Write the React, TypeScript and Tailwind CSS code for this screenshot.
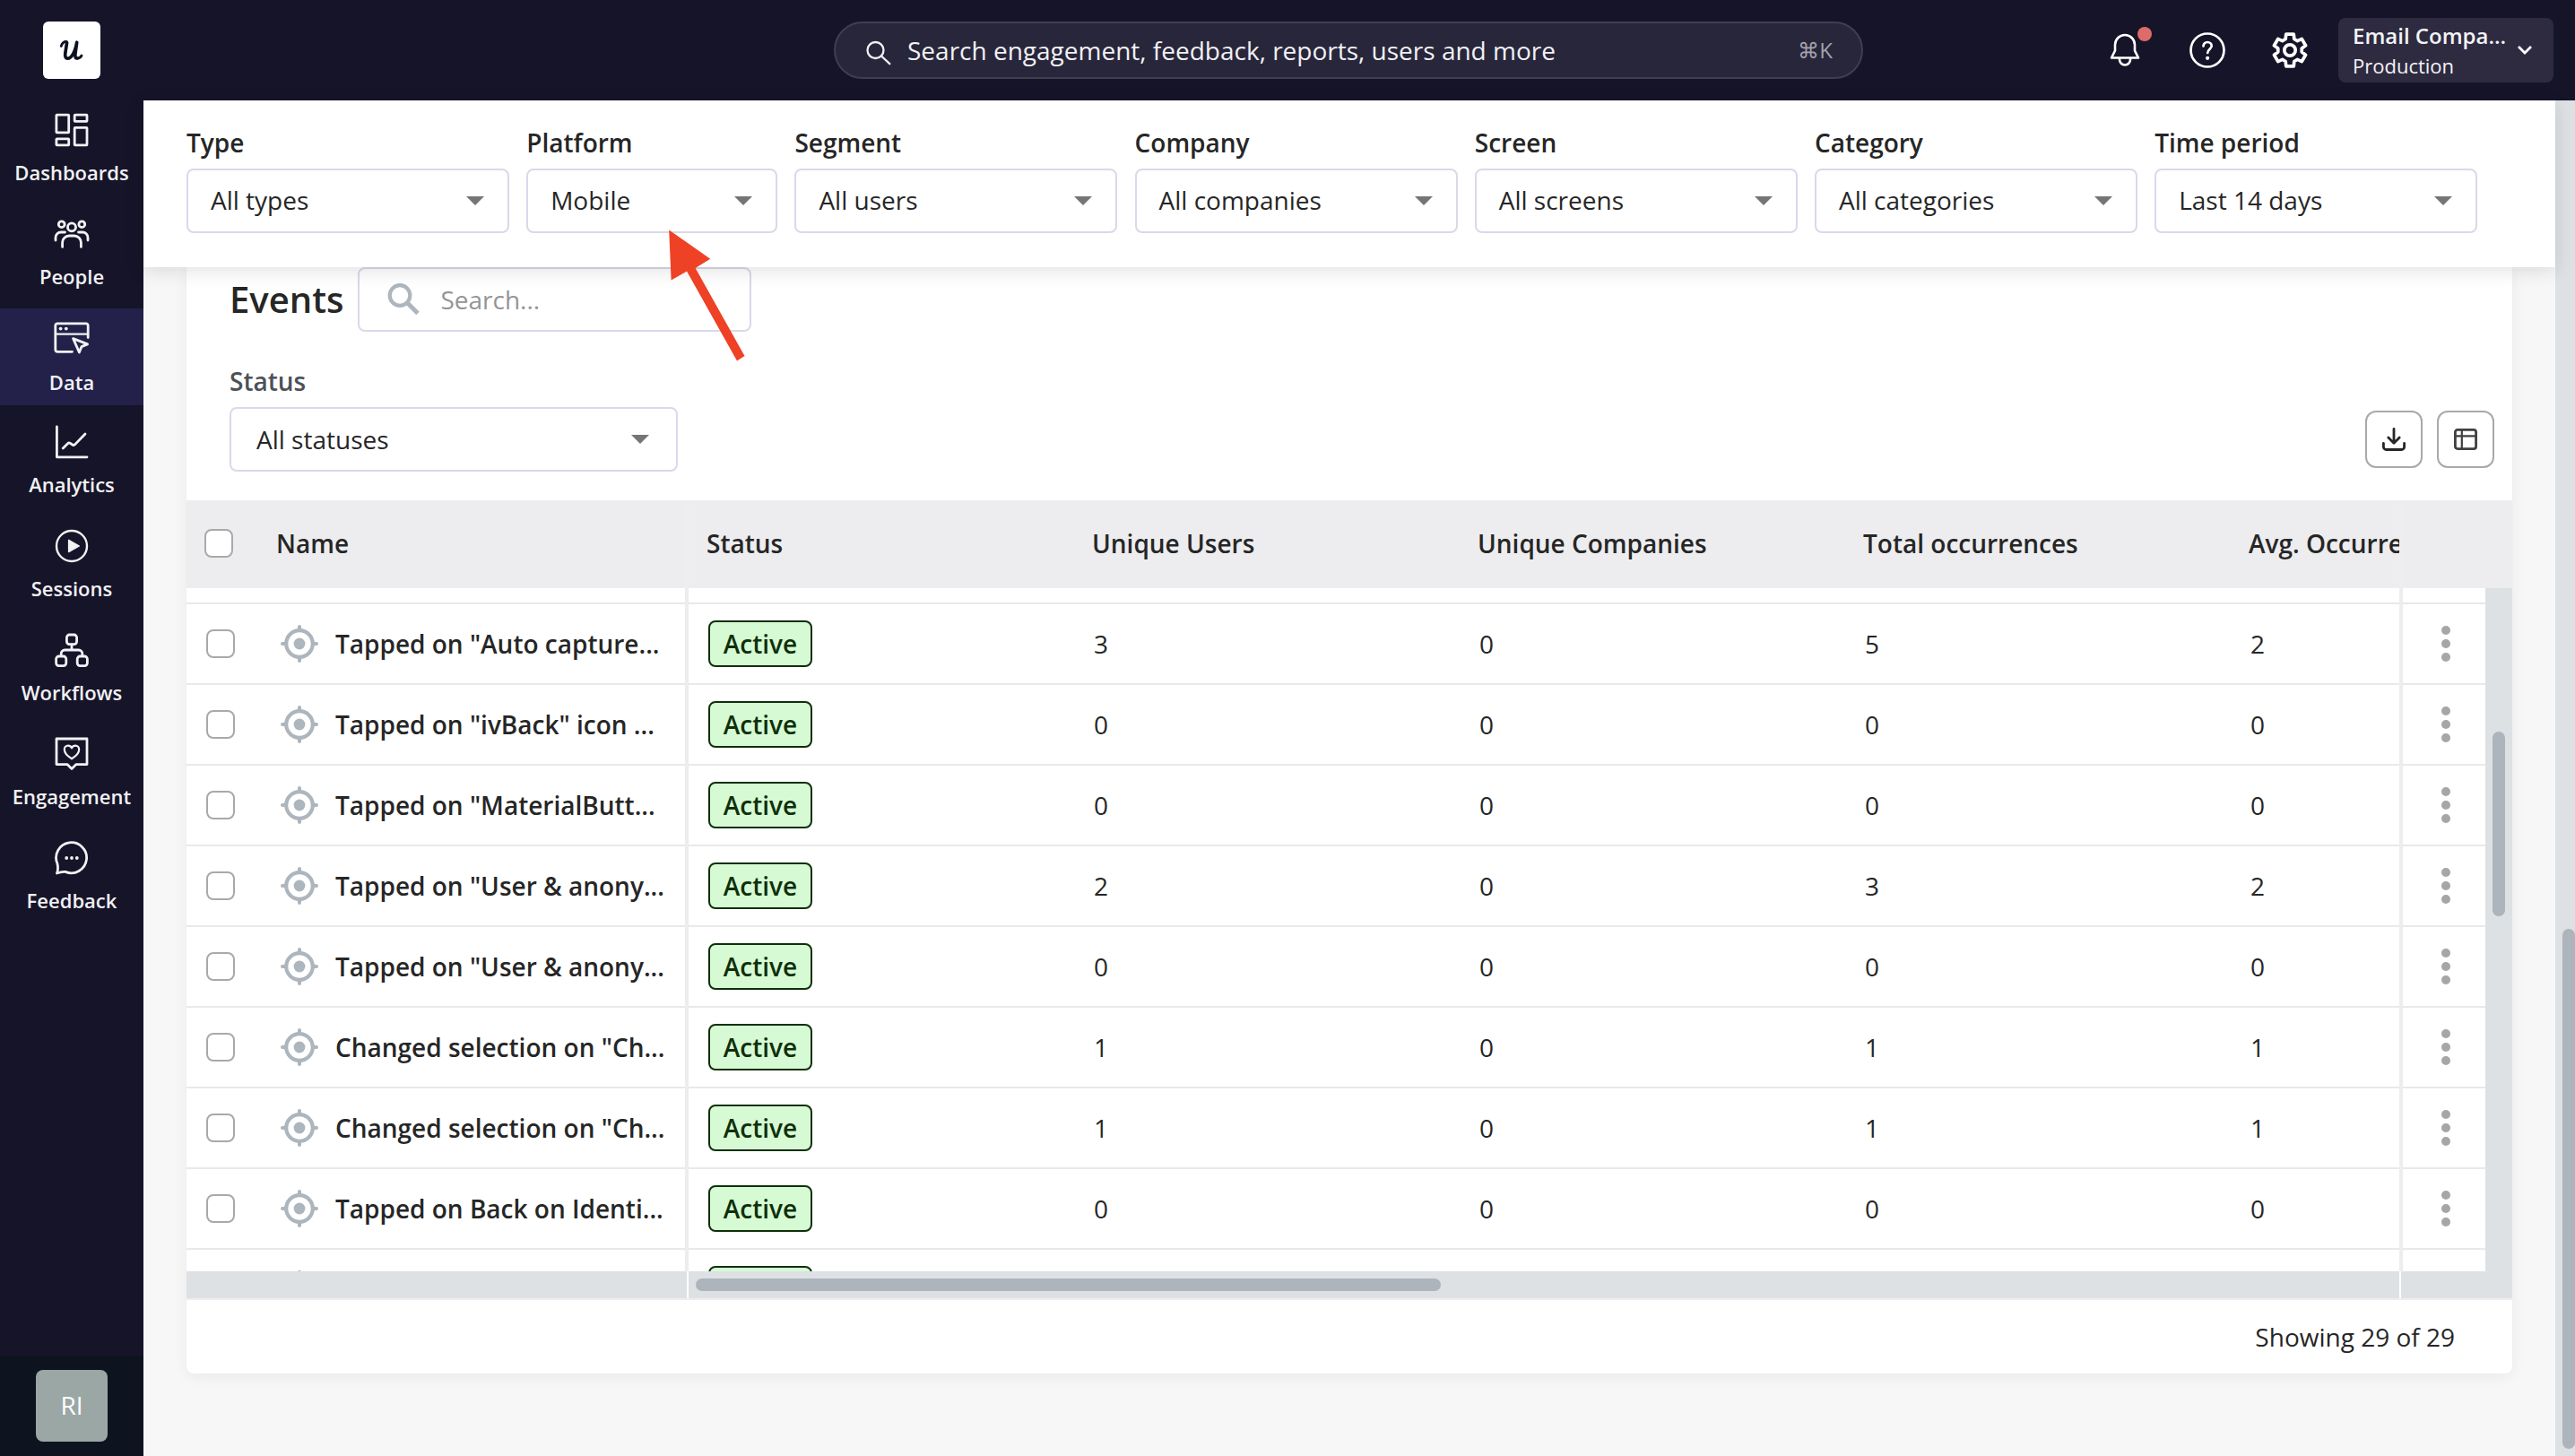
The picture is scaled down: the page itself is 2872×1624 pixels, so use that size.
import React from 'react';

interface NavItem {
  label: string;
  icon: React.ReactNode;
  active?: boolean;
}

interface EventRow {
  name: string;
  values: number[];
}

const navItems: NavItem[] = [
  {
    label: 'Dashboards',
    icon: (
      <>
        <rect x="2.9" y="3.1" width="13.8" height="19.8" rx="0.6" />
        <rect x="23.2" y="3.1" width="13.8" height="7.2" rx="0.6" />
        <rect x="23.2" y="17.4" width="13.8" height="19.5" rx="0.6" />
        <rect x="2.9" y="29.8" width="13.8" height="7.1" rx="0.6" />
      </>
    ),
  },
  {
    label: 'People',
    icon: (
      <>
        <circle cx="8.7" cy="9.2" r="3.4" />
        <circle cx="20" cy="12.4" r="4.5" />
        <circle cx="31.3" cy="9.2" r="3.4" />
        <path d="M9.6 34.4V29.5a7.5 7.5 0 0 1 7.5-7.5h5.8a7.5 7.5 0 0 1 7.5 7.5v4.9" />
        <path d="M2 27v-3a6 6 0 0 1 6-6h4.5M38 27v-3a6 6 0 0 0-6-6h-4.5" />
      </>
    ),
  },
  {
    label: 'Data',
    active: true,
    icon: (
      <>
        <path d="M20.5 35.3H4a2.2 2.2 0 0 1-2.2-2.2V6A2.2 2.2 0 0 1 4 3.8h32A2.2 2.2 0 0 1 38.2 6v13.5" />
        <path d="M2 15.6h36" strokeWidth="2.2" />
        <circle cx="7.6" cy="9.6" r="1.9" fill="currentColor" stroke="none" />
        <circle cx="13.8" cy="9.6" r="1.9" fill="currentColor" stroke="none" />
        <path d="M21.6 20.6 37.6 26.9 31 29.6 28.4 36z" />
      </>
    ),
  },
  {
    label: 'Analytics',
    icon: (
      <>
        <path d="M3.4 3v33.8H37" />
        <path d="M10.2 27l5.6-5.6a1.8 1.8 0 0 1 2.2-.2l3.2 2a1.8 1.8 0 0 0 2.3-.3L35 11" />
      </>
    ),
  },
  {
    label: 'Sessions',
    icon: (
      <>
        <circle cx="20" cy="20" r="17" strokeWidth="2.4" />
        <path d="M16.6 13.4v13.2L28.4 20z" fill="currentColor" strokeWidth="1.4" />
      </>
    ),
  },
  {
    label: 'Workflows',
    icon: (
      <>
        <rect x="14.4" y="3" width="11.2" height="10.6" rx="3" />
        <rect x="2.6" y="27" width="11.2" height="10.6" rx="3" />
        <rect x="26.2" y="27" width="11.2" height="10.6" rx="3" />
        <path d="M20 14v6M8.2 26.5V24a4 4 0 0 1 4-4h15.6a4 4 0 0 1 4 4v2.5" />
      </>
    ),
  },
  {
    label: 'Engagement',
    icon: (
      <>
        <path d="M3 3h34v28.6H25L20 36.4l-5-4.8H3z" />
        <path
          d="M20 25.3c-3-1.8-8.2-5.6-8.2-10.2 0-2.7 1.9-4.4 4.1-4.4 1.8 0 3.3 1 4.1 2.7.8-1.7 2.3-2.7 4.1-2.7 2.2 0 4.1 1.7 4.1 4.4 0 4.6-5.2 8.4-8.2 10.2z"
          strokeWidth="2.2"
        />
      </>
    ),
  },
  {
    label: 'Feedback',
    icon: (
      <>
        <path d="M3.5 37c1.2-3 1.5-5.800.5-10.500A17 17 0 1 1 13 35.400c-3-.6-6 .6-9.500 1.600z" />
        <circle cx="14.2" cy="20" r="1.9" fill="currentColor" stroke="none" />
        <circle cx="20" cy="20" r="1.9" fill="currentColor" stroke="none" />
        <circle cx="25.8" cy="20" r="1.9" fill="currentColor" stroke="none" />
      </>
    ),
  },
];

const filters = [
  { label: 'Type', value: 'All types', width: 'w-[360px]' },
  { label: 'Platform', value: 'Mobile', width: 'w-[280px]' },
  { label: 'Segment', value: 'All users', width: 'w-[360px]' },
  { label: 'Company', value: 'All companies', width: 'w-[360px]' },
  { label: 'Screen', value: 'All screens', width: 'w-[360px]' },
  { label: 'Category', value: 'All categories', width: 'w-[360px]' },
  { label: 'Time period', value: 'Last 14 days', width: 'w-[360px]' },
];

const columns = ['Status', 'Unique Users', 'Unique Companies', 'Total occurrences', 'Avg. Occurrences'];

const events: EventRow[] = [
  { name: 'Tapped on "Auto capture...', values: [3, 0, 5, 2] },
  { name: 'Tapped on "ivBack" icon ...', values: [0, 0, 0, 0] },
  { name: 'Tapped on "MaterialButt...', values: [0, 0, 0, 0] },
  { name: 'Tapped on "User & anony...', values: [2, 0, 3, 2] },
  { name: 'Tapped on "User & anony...', values: [0, 0, 0, 0] },
  { name: 'Changed selection on "Ch...', values: [1, 0, 1, 1] },
  { name: 'Changed selection on "Ch...', values: [1, 0, 1, 1] },
  { name: 'Tapped on Back on Identi...', values: [0, 0, 0, 0] },
];

// six flat teeth around the centre of a 40x40 box
const gearPath = (() => {
  const points: string[] = [];
  for (let i = 0; i < 6; i++) {
    const mid = -90 + i * 60;
    [[-21, 13.4], [-13.5, 18.3], [13.5, 18.3], [21, 13.4]].forEach(([offset, radius]) => {
      const a = ((mid + offset) * Math.PI) / 180;
      points.push(`${(20 + radius * Math.cos(a)).toFixed(2)} ${(20 + radius * Math.sin(a)).toFixed(2)}`);
    });
  }
  return `M${points.join('L')}Z`;
})();

const Caret: React.FC = () => (
  <svg className="w-5 h-2.5 shrink-0 text-[#757575]" viewBox="0 0 20 10" fill="currentColor">
    <path d="M0 0h20L10 10z" />
  </svg>
);

const Checkbox: React.FC = () => (
  <span className="block w-8 h-8 shrink-0 rounded-lg border-2 border-[#a9a9ab] bg-white" />
);

const TargetIcon: React.FC = () => (
  <svg className="w-[42px] h-[42px] shrink-0 text-[#adb5bd]" viewBox="0 0 42 42" fill="none" stroke="currentColor">
    <circle cx="21" cy="21" r="14.8" strokeWidth="4.2" />
    <circle cx="21" cy="21" r="6.4" fill="currentColor" stroke="none" />
    <path d="M21 2v4M21 36v4M2 21h4M36 21h4" strokeWidth="4" strokeLinecap="round" />
  </svg>
);

const TopBar: React.FC = () => (
  <header className="flex items-center h-28 shrink-0 bg-[#161429] pr-6">
    <div className="flex justify-center w-40 shrink-0">
      <div className="w-16 h-16 rounded-md bg-white">
        <svg className="w-16 h-16" viewBox="0 0 64 64" fill="none" stroke="#0d1220" strokeLinecap="round" strokeLinejoin="round">
          <path d="M20.2 27.400c1.200-3.300 3.200-5.200 6-5" strokeWidth="2.800" />
          <path d="M26.600 23.500l-1.800 12c-.5 3.700.5 5.700 2.600 5.700 4.200 0 8.400-7 10.300-18l-1.700 12.300c-.6 4.200.4 5.700 2.200 5.500" strokeWidth="3.700" />
          <path d="M38.200 41c2.200 0 3.800-1.200 4.800-3" strokeWidth="2.800" />
        </svg>
      </div>
    </div>

    <div className="flex items-center w-[1148px] h-16 ml-[770px] pl-[34px] pr-8 rounded-full border-2 border-[#403e51] bg-[#28263b] text-[28px]">
      <svg className="w-7 h-7 mt-1.5 text-[#f1f1f3]" viewBox="0 0 28 28" fill="none" stroke="currentColor" strokeWidth="2.3" strokeLinecap="round">
        <circle cx="10.5" cy="11" r="9" />
        <path d="M17 17.500l9.300 8.700" />
      </svg>
      <span className="ml-[18px] text-[#f1f1f3]">Search engagement, feedback, reports, users and more</span>
      <span className="ml-auto text-[24px] text-[#a3a2ab]">⌘K</span>
    </div>

    <div className="flex items-center ml-auto text-white">
      <div className="relative">
        <svg className="w-[34px] h-[38px]" viewBox="0 0 34 38" fill="none" stroke="currentColor" strokeWidth="2.6" strokeLinecap="round" strokeLinejoin="round">
          <path d="M2 27.500 6 19.500V13a11 11 0 0 1 22 0v6.500l4 8z" />
          <path d="M11 28v1.500a6 6 0 0 0 12 0V28" />
        </svg>
        <span className="absolute left-[31px] -top-[7px] w-4 h-4 rounded-full bg-[#dc6b69]" />
      </div>
      <svg className="w-10 h-10 ml-[55px]" viewBox="0 0 40 40" fill="none" stroke="currentColor" strokeWidth="2.7" strokeLinecap="round">
        <circle cx="20" cy="20" r="18.5" />
        <path d="M15.500 15.500c0-2.700 2-4.500 4.600-4.500s4.600 1.800 4.600 4.300c0 3.200-4.500 3.700-4.500 7.700" />
        <circle cx="20.1" cy="28.8" r="2.1" fill="currentColor" stroke="none" />
      </svg>
      <svg className="w-10 h-10 ml-[52px]" viewBox="0 0 40 40" fill="none" stroke="currentColor" strokeWidth="3.7" strokeLinejoin="round">
        <path d={gearPath} />
        <circle cx="20" cy="20" r="6.2" />
      </svg>
      <div className="flex items-center justify-between w-60 h-[72px] ml-[34px] pl-4 pr-6 rounded-lg bg-[#2e2b41]">
        <div className="text-[#f3f3f5]">
          <div className="text-[24px] leading-[33px] font-semibold">Email Compa...</div>
          <div className="pt-px text-[22px] leading-[33px]">Production</div>
        </div>
        <svg className="w-4 h-2.5 shrink-0" viewBox="0 0 16 10" fill="none" stroke="currentColor" strokeWidth="2.8">
          <path d="M1 1l7 7 7-7" />
        </svg>
      </div>
    </div>
  </header>
);

const Sidebar: React.FC = () => (
  <aside className="flex flex-col w-40 shrink-0 bg-[#161429] text-[#f1f1f3]">
    <nav className="flex flex-col gap-2">
      {navItems.map((item) => (
        <div key={item.label} className={`flex flex-col items-center h-[108px] pt-[13px] ${item.active ? 'bg-[#232149]' : ''}`}>
          <svg className="w-10 h-10" viewBox="0 0 40 40" fill="none" stroke="currentColor" strokeWidth="2.8" strokeLinecap="round" strokeLinejoin="round">
            {item.icon}
          </svg>
          <span className={`text-[22px] leading-[30px] font-semibold ${item.active ? 'mt-3.5' : 'mt-3'}`}>{item.label}</span>
        </div>
      ))}
    </nav>
    <div className="flex items-center justify-center h-28 mt-auto bg-[#0d141f]">
      <div className="flex items-center justify-center w-20 h-20 pb-0.5 rounded-lg bg-[#9aa7a5] text-[28px] text-white">RI</div>
    </div>
  </aside>
);

const FilterBar: React.FC = () => (
  <div className="relative z-10 flex gap-[19.2px] h-[186px] shrink-0 pt-[27px] pl-12 bg-white shadow-[0_4px_20px_rgba(0,0,0,0.12)]">
    {filters.map((filter) => (
      <div key={filter.label} className={`shrink-0 ${filter.width}`}>
        <div className="text-[28px] leading-[40px] font-semibold">{filter.label}</div>
        <div className="flex items-center justify-between h-[72px] mt-[9px] pl-[25px] pr-[26px] rounded-lg border-2 border-[#d9d9ea]">
          <span className="-mt-0.5">{filter.value}</span>
          <Caret />
        </div>
      </div>
    ))}
  </div>
);

const CardHeader: React.FC = () => (
  <div className="h-[260px] pl-12 pr-5">
    <div className="flex items-center gap-4">
      <h2 className="text-[40px] leading-[72px] font-semibold">Events</h2>
      <div className="flex items-center w-[439px] h-[72px] pl-[31px] rounded-lg border-2 border-[#d9d9ea]">
        <svg className="w-9 h-9 text-[#adb5bd]" viewBox="0 0 36 36" fill="none" stroke="currentColor" strokeWidth="4.2">
          <circle cx="14" cy="13.5" r="11.3" />
          <path d="M22 21.500 34 33.500" strokeWidth="5" />
        </svg>
        <span className="ml-[23px] text-[#949496]">Search...</span>
      </div>
    </div>
    <div className="flex items-end justify-between mt-[35px]">
      <div className="w-[500px]">
        <div className="leading-[40px] font-semibold text-[#4d5158]">Status</div>
        <div className="flex items-center justify-between h-[72px] mt-[9px] pl-7 pr-[30px] rounded-lg border-2 border-[#d9d9ea]">
          <span>All statuses</span>
          <Caret />
        </div>
      </div>
      <div className="flex gap-4 mb-1">
        <div className="flex items-center justify-center w-16 h-16 rounded-xl border-2 border-[#a9a9ab]">
          <svg className="w-[26px] h-[26px]" viewBox="0 0 26 26" fill="none" stroke="currentColor" strokeWidth="2.8" strokeLinecap="round" strokeLinejoin="round">
            <path d="M13 1.400V17M6.800 11l6.200 6.200 6.200-6.200M1.400 17.500v4a3 3 0 0 0 3 3h17.200a3 3 0 0 0 3-3v-4" />
          </svg>
        </div>
        <div className="flex items-center justify-center w-16 h-16 rounded-xl border-2 border-[#a9a9ab] text-[#404042]">
          <svg className="w-[26px] h-6" viewBox="0 0 26 24" fill="none" stroke="currentColor" strokeWidth="2.8">
            <rect x="1.4" y="1.4" width="23.2" height="21.2" rx="2.5" />
            <path d="M1.400 8.300h23.200M8.800 1.400v21.200" strokeWidth="2.2" />
          </svg>
        </div>
      </div>
    </div>
  </div>
);

const TableHead: React.FC = () => (
  <div className="flex items-center h-[98px] bg-[#ededef] font-semibold">
    <div className="flex items-center w-[556px] shrink-0 pl-5 pb-0.5">
      <Checkbox />
      <span className="ml-12">Name</span>
    </div>
    <div className="w-1 h-full shrink-0 bg-[#eeeef0]" />
    <div className="flex w-[1908px] shrink-0 overflow-hidden -mt-0.5">
      {columns.map((column) => (
        <div key={column} className="w-[430px] shrink-0 pl-5 whitespace-nowrap">{column}</div>
      ))}
    </div>
    <div className="w-1 h-full shrink-0 bg-[#eeeef0]" />
  </div>
);

const TableRow: React.FC<{ row: EventRow }> = ({ row }) => (
  <div className="flex h-[90px] shrink-0">
    <div className="flex items-center w-[556px] shrink-0 pl-[22px] border-b-2 border-[#e9e9eb]">
      <Checkbox />
      <div className="flex items-center ml-[51px] gap-[19px]">
        <TargetIcon />
        <span className="font-semibold whitespace-nowrap">{row.name}</span>
      </div>
    </div>
    <div className="w-1 shrink-0 bg-[#ededef]" />
    <div className="flex items-center w-[1908px] shrink-0 overflow-hidden border-b-2 border-[#e9e9eb]">
      <div className="w-[430px] shrink-0 pl-[22px]">
        <span className="flex items-center justify-center w-[116px] h-[52px] rounded-lg border-2 border-[#0f2f0b] bg-[#d6fad3] font-semibold text-[#0f2f0b]">
          Active
        </span>
      </div>
      {row.values.map((value, i) => (
        <div key={i} className="w-[430px] shrink-0 pl-[22px]">{value}</div>
      ))}
    </div>
    <div className="w-1 shrink-0 bg-[#ededef]" />
    <div className="flex flex-col items-center justify-center gap-[5px] w-[92px] shrink-0 pl-1 border-b-2 border-[#e9e9eb]">
      <span className="w-2.5 h-2.5 rounded-full bg-[#a6a6a8]" />
      <span className="w-2.5 h-2.5 rounded-full bg-[#a6a6a8]" />
      <span className="w-2.5 h-2.5 rounded-full bg-[#a6a6a8]" />
    </div>
  </div>
);

const EventsTable: React.FC = () => (
  <div>
    <TableHead />
    <div className="flex h-[762px]">
      <div className="flex flex-col w-[2564px] h-full overflow-hidden">
        {/* tail of the row scrolled out above */}
        <div className="flex h-[18px] shrink-0">
          <div className="w-[556px] border-b-2 border-[#e9e9eb]" />
          <div className="w-1 bg-[#ededef]" />
          <div className="w-[1908px] border-b-2 border-[#e9e9eb]" />
          <div className="w-1 bg-[#ededef]" />
          <div className="w-[92px] border-b-2 border-[#e9e9eb]" />
        </div>
        {events.map((row, i) => (
          <TableRow key={i} row={row} />
        ))}
        {/* top edge of the next row, mostly under the scrollbar */}
        <div className="flex h-6 shrink-0 overflow-hidden">
          <div className="w-[556px] pl-[105px] pt-[23px]">
            <TargetIcon />
          </div>
          <div className="w-1 bg-[#ededef]" />
          <div className="w-[1908px] pl-[22px] pt-[18px]">
            <div className="w-[116px] h-[52px] rounded-lg border-2 border-[#0f2f0b] bg-[#d6fad3]" />
          </div>
          <div className="w-1 bg-[#ededef]" />
        </div>
      </div>
      <div className="w-[30px] pt-40 bg-[#dde1e4]">
        <div className="w-3.5 h-[206px] mx-auto rounded-full bg-[#adb4bb]" />
      </div>
    </div>
    <div className="flex h-8 border-b-2 border-[#ededef] bg-white">
      <div className="w-[558px] bg-[#dde1e4]" />
      <div className="flex items-center w-[1908px] ml-0.5 pl-2 bg-[#dde1e4]">
        <div className="w-[831px] h-3.5 rounded-full bg-[#adb4bb]" />
      </div>
      <div className="w-[124px] ml-0.5 bg-[#dde1e4]" />
    </div>
    <div className="flex items-center justify-end h-[82px] pr-16">Showing 29 of 29</div>
  </div>
);

const Pointer: React.FC = () => (
  <svg className="absolute left-[740px] top-[250px] z-20 w-[100px] h-[160px]" viewBox="740 250 100 160" fill="#ee4126">
    <path d="M746.200 256.500 792.200 288.700 775.600 299 830.500 397 822 402.400 766 302.600 748.600 312.500z" />
  </svg>
);

export default function App() {
  return (
    <div className="relative flex flex-col w-[2872px] h-[1624px] overflow-hidden bg-[#f7f7f7] font-['Open_Sans',sans-serif] text-[28px] leading-[38px] text-[#262626]">
      <TopBar />
      <div className="flex flex-1 min-h-0">
        <Sidebar />
        <main className="flex flex-col w-[2690px] shrink-0">
          <FilterBar />
          <div className="w-[2594px] ml-12 rounded-b-lg bg-white shadow-[0_4px_16px_rgba(0,0,0,0.06)]">
            <CardHeader />
            <EventsTable />
          </div>
        </main>
        <div className="flex flex-col items-end justify-end w-[22px] pb-2 bg-[#dde1e4]">
          <div className="w-3.5 h-[580px] rounded-full bg-[#adb4bb]" />
        </div>
      </div>
      <Pointer />
    </div>
  );
}
